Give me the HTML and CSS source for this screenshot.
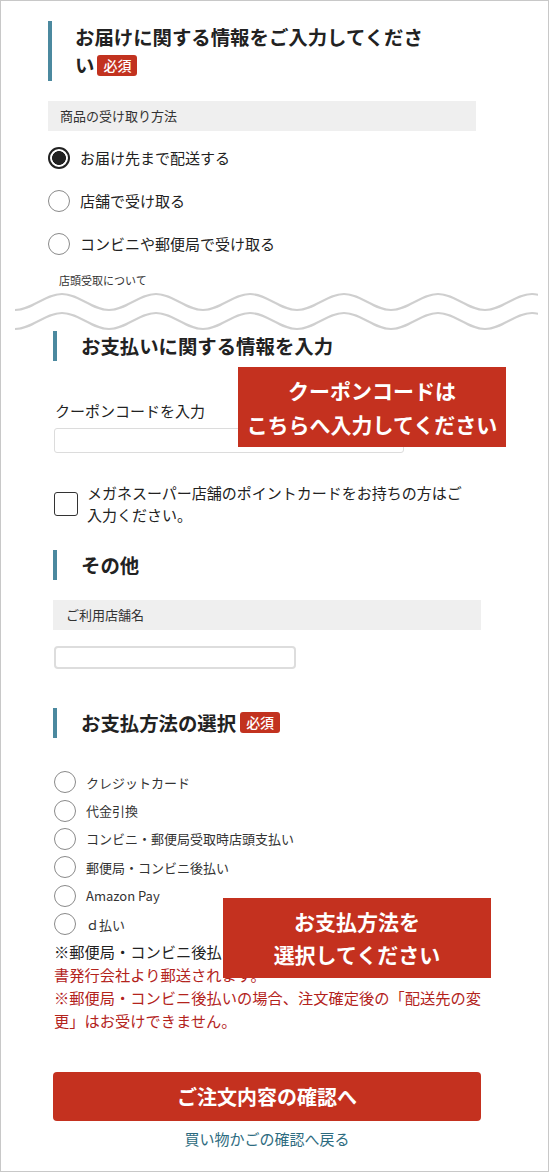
FILE: index.html
```html
<!DOCTYPE html>
<html lang="ja">
<head>
<meta charset="utf-8">
<title>ご注文手続き</title>
<link rel="stylesheet" href="styles.css">
</head>
<body>
<div class="page">
  <section class="block block-top">
    <h2 class="heading heading-main">お届けに関する情報をご入力してください<span class="badge">必須</span></h2>
    <div class="subhead">商品の受け取り方法</div>
    <ul class="choices">
      <li class="choice"><span class="radio checked"></span>お届け先まで配送する</li>
      <li class="choice"><span class="radio"></span>店舗で受け取る</li>
      <li class="choice"><span class="radio"></span>コンビニや郵便局で受け取る</li>
    </ul>
    <a class="small-link">店頭受取について</a>
  </section>

  <svg class="waves" width="537" height="43" viewBox="0 0 537 43" aria-hidden="true">
    <path d="M14 22 C31.1 22 43.9 6 61 6 S90.9 22 108 22 S137.9 6 155 6 S184.9 22 202 22 S231.9 6 249 6 S278.9 22 296 22 S325.9 6 343 6 S372.9 22 390 22 S419.9 6 437 6 S466.9 22 484 22 S513.9 6 531 6 S560.9 22 578 22" />
    <path d="M14 41 C31.1 41 43.9 25 61 25 S90.9 41 108 41 S137.9 25 155 25 S184.9 41 202 41 S231.9 25 249 25 S278.9 41 296 41 S325.9 25 343 25 S372.9 41 390 41 S419.9 25 437 25 S466.9 41 484 41 S513.9 25 531 25 S560.9 41 578 41" />
  </svg>

  <section class="block block-bottom">
    <h2 class="heading">お支払いに関する情報を入力</h2>
    <label class="field-label">クーポンコードを入力</label>
    <div class="text-input coupon-input"></div>

    <div class="check-row">
      <span class="checkbox"></span>
      <span class="check-text">メガネスーパー店舗のポイントカードをお持ちの方はご入力ください。</span>
    </div>

    <h2 class="heading heading-other">その他</h2>
    <div class="subhead subhead-store">ご利用店舗名</div>
    <div class="text-input store-input"></div>

    <h2 class="heading heading-pay">お支払方法の選択<span class="badge">必須</span></h2>
    <ul class="pay-list">
      <li class="pay-item"><span class="radio"></span>クレジットカード</li>
      <li class="pay-item"><span class="radio"></span>代金引換</li>
      <li class="pay-item"><span class="radio"></span>コンビニ・郵便局受取時店頭支払い</li>
      <li class="pay-item"><span class="radio"></span>郵便局・コンビニ後払い</li>
      <li class="pay-item"><span class="radio"></span>Amazon Pay</li>
      <li class="pay-item"><span class="radio"></span>ｄ払い</li>
    </ul>
    <p class="notes"><span class="note-dark">※郵便局・コンビニ後払いの場合、請求書は商品とは別に請求</span>書発行会社より郵送されます。<br>※郵便局・コンビニ後払いの場合、注文確定後の「配送先の変更」はお受けできません。</p>

    <button class="submit" type="button">ご注文内容の確認へ</button>
    <a class="back-link">買い物かごの確認へ戻る</a>
  </section>

  <div class="callout callout-coupon">クーポンコードは<br>こちらへ入力してください</div>
  <div class="callout callout-pay">お支払方法を<br>選択してください</div>
</div>
</body>
</html>
```

FILE: styles.css
```css
* {
  box-sizing: border-box;
}

html, body {
  margin: 0;
  padding: 0;
  background: #fff;
}

body {
  font-family: "Noto Sans CJK JP", "Noto Sans", sans-serif;
  color: #222;
}

.page {
  position: relative;
  width: 549px;
  height: 1172px;
  border: 1px solid #c8c8c8;
  overflow: hidden;
}

.block-top {
  padding: 20px 72px 0 47px;
}

.block-bottom {
  padding: 0 67px 0 52px;
}

.heading {
  margin: 0;
  border-left: 4px solid #4b899f;
  padding-left: 24px;
  font-size: 19.4px;
  font-weight: 700;
  line-height: 30px;
  color: #222;
}

.heading-main {
  border-left-width: 4px;
  padding: 2px 43px 2px 23px;
  line-height: 28px;
}

.badge {
  display: inline-block;
  vertical-align: top;
  margin: 4px 0 0 3px;
  height: 21px;
  padding: 0 6px;
  border-radius: 3px;
  background: #c2321f;
  color: #fff;
  font-size: 14px;
  font-weight: 500;
  line-height: 21px;
}

.heading-pay .badge {
  margin-left: 4px;
}

.subhead {
  margin-top: 20px;
  height: 30px;
  padding-left: 12px;
  background: #efefef;
  font-size: 13px;
  line-height: 30px;
  color: #333;
}

.choices {
  list-style: none;
  margin: 5px 0 0;
  padding: 0;
}

.choice {
  display: flex;
  align-items: center;
  gap: 10px;
  height: 43px;
  font-size: 15px;
  color: #222;
}

.radio {
  flex: none;
  width: 22px;
  height: 22px;
  border: 1px solid #8a8a8a;
  border-radius: 50%;
  background: #fff;
}

.radio.checked {
  border: 2px solid #222;
  background: radial-gradient(circle, #222 0 6.6px, #fff 7.2px);
}

.small-link {
  display: block;
  margin-top: 7px;
  padding-left: 11px;
  font-size: 11px;
  line-height: 16px;
  color: #333;
}

.waves {
  display: block;
}

.waves path {
  fill: none;
  stroke: #cfcfcf;
  stroke-width: 2;
}

.field-label {
  display: block;
  margin-top: 39px;
  padding-left: 2px;
  font-size: 15px;
  line-height: 22px;
  color: #222;
}

.text-input {
  background: #fff;
}

.coupon-input {
  margin-top: 6px;
  margin-left: 1px;
  width: 350px;
  height: 25px;
  border: 1px solid #dcdcdc;
  border-radius: 3px;
}

.check-row {
  display: flex;
  align-items: center;
  gap: 9px;
  margin-top: 29px;
}

.checkbox {
  flex: none;
  width: 24px;
  height: 24px;
  margin-left: 1px;
  border: 1px solid #333;
  border-radius: 3px;
}

.check-text {
  max-width: 385px;
  font-size: 15px;
  line-height: 22px;
  color: #222;
}

.heading-other {
  margin-top: 24px;
}

.subhead-store {
  padding-left: 13px;
}

.store-input {
  margin-top: 16px;
  margin-left: 1px;
  width: 242px;
  height: 23px;
  border: 2px solid #dddddd;
  border-radius: 4px;
}

.heading-pay {
  margin-top: 39px;
}

.pay-list {
  list-style: none;
  margin: 30px 0 0;
  padding: 0 0 0 1px;
}

.pay-item {
  display: flex;
  align-items: center;
  gap: 10px;
  height: 28.4px;
  font-size: 13px;
  color: #333;
}

.notes {
  margin: 2px 0 0 1px;
  width: 432px;
  font-size: 15.25px;
  line-height: 23px;
  color: #b3231c;
}

.note-dark {
  color: #222;
}

.submit {
  display: block;
  width: 100%;
  height: 49px;
  margin-top: 40px;
  border: 0;
  border-radius: 4px;
  background: #c4311f;
  color: #fff;
  font-family: inherit;
  font-size: 20px;
  font-weight: 700;
  line-height: 49px;
  padding: 0;
}

.back-link {
  display: block;
  margin-top: 7px;
  text-align: center;
  font-size: 15px;
  line-height: 22px;
  color: #2d6b80;
}

.callout {
  position: absolute;
  width: 268px;
  height: 80px;
  padding: 6px 0;
  background: #c4311f;
  color: #fff;
  text-align: center;
  font-size: 21px;
  font-weight: 700;
  line-height: 34px;
}

.callout-coupon {
  left: 237px;
  top: 366px;
}

.callout-pay {
  left: 222px;
  top: 897px;
  line-height: 33px;
  padding-top: 7px;
}
```
